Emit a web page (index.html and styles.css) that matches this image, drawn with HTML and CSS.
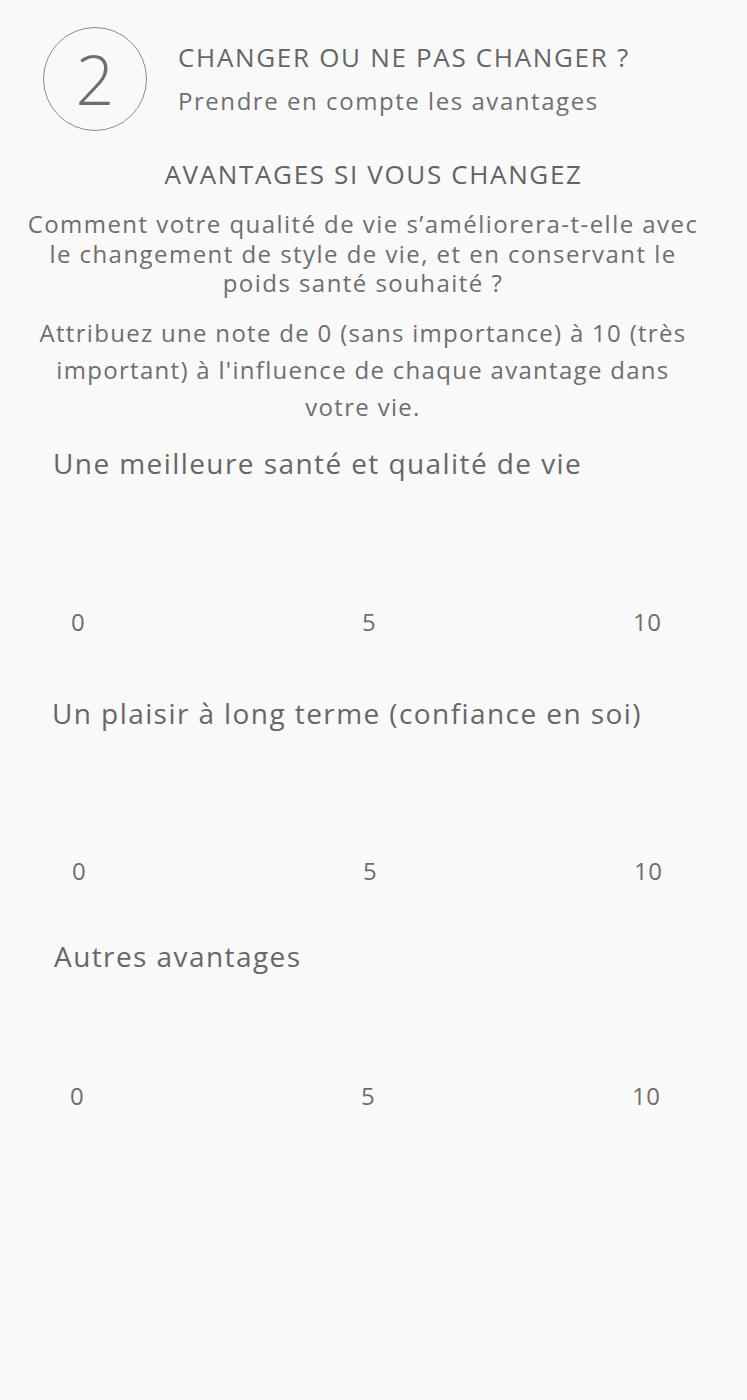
FILE: index.html
```html
<!DOCTYPE html>
<html lang="fr">
<head>
<meta charset="utf-8">
<link rel="stylesheet" href="styles.css">
</head>
<body>
<div class="page">
  <header class="header">
    <div class="step">2</div>
    <div class="head-text">
      <div class="title">CHANGER OU NE PAS CHANGER ?</div>
      <div class="subtitle">Prendre en compte les avantages</div>
    </div>
  </header>
  <h2 class="section">AVANTAGES SI VOUS CHANGEZ</h2>
  <p class="question">Comment votre qualité de vie s’améliorera-t-elle avec le changement de style de vie, et en conservant le poids santé souhaité ?</p>
  <p class="instruction">Attribuez une note de 0 (sans importance) à 10 (très important) à l'influence de chaque avantage dans votre vie.</p>

  <div class="item item1">
    <div class="label">Une meilleure santé et qualité de vie</div>
    <div class="scale"><span>0</span><span>5</span><span>10</span></div>
  </div>
  <div class="item item2">
    <div class="label">Un plaisir à long terme (confiance en soi)</div>
    <div class="scale"><span>0</span><span>5</span><span>10</span></div>
  </div>
  <div class="item item3">
    <div class="label">Autres avantages</div>
    <div class="scale"><span>0</span><span>5</span><span>10</span></div>
  </div>
</div>
</body>
</html>
```
FILE: styles.css
```css
html, body {
  margin: 0;
  padding: 0;
  background: #f9f9f9;
}
body {
  font-family: "Open Sans", "Noto Sans", sans-serif;
  font-weight: 400;
  color: #6b6b6b;
}
.page {
  width: 747px;
  min-height: 1400px;
  display: flex;
  flex-direction: column;
}
.header {
  display: flex;
  align-items: flex-start;
  padding: 27px 0 0 43px;
}
.step {
  flex: none;
  width: 102px;
  height: 102px;
  border: 1px solid #8c8c8c;
  border-radius: 50%;
  display: flex;
  align-items: center;
  justify-content: center;
  font-size: 68px;
  font-weight: 300;
  line-height: 1;
  color: #6e6e6e;
}
.head-text {
  margin-left: 31px;
  padding-top: 14px;
  display: flex;
  flex-direction: column;
  gap: 13px;
}
.title {
  font-size: 26px;
  line-height: 32px;
  letter-spacing: 1.68px;
  color: #666;
}
.subtitle {
  font-size: 24px;
  line-height: 30px;
  letter-spacing: 1.55px;
  color: #707070;
}
.section {
  margin: 27px 0 0;
  font-size: 26px;
  font-weight: 400;
  line-height: 32px;
  letter-spacing: 1.65px;
  text-align: center;
  color: #636363;
}
.question {
  margin: 19px 37px 0 16px;
  font-size: 24px;
  line-height: 29.5px;
  letter-spacing: 1.45px;
  text-align: center;
  color: #6e6e6e;
}
.instruction {
  margin: 16.7px 50px 0 29px;
  font-size: 24px;
  line-height: 37px;
  letter-spacing: 1.3px;
  text-align: center;
  color: #6e6e6e;
}
.item {
  display: flex;
  flex-direction: column;
}
.label {
  font-size: 28px;
  line-height: 36px;
  letter-spacing: 1.42px;
  color: #676767;
}
.scale {
  display: grid;
  grid-template-columns: 291px 271px auto;
  font-size: 24px;
  line-height: 30px;
  letter-spacing: 0.6px;
  color: #6e6e6e;
}
.item1 { padding-left: 53px; }
.item1 .label { margin-top: 19.9px; }
.item1 .scale { margin-top: 125.6px; padding-left: 18px; }
.item2 { padding-left: 52px; }
.item2 .label { margin-top: 58.4px; }
.item2 .scale { margin-top: 124.6px; padding-left: 20px; }
.item3 { padding-left: 54px; }
.item3 .label { margin-top: 52.4px; }
.item3 .scale { margin-top: 106.6px; padding-left: 16px; }
```
